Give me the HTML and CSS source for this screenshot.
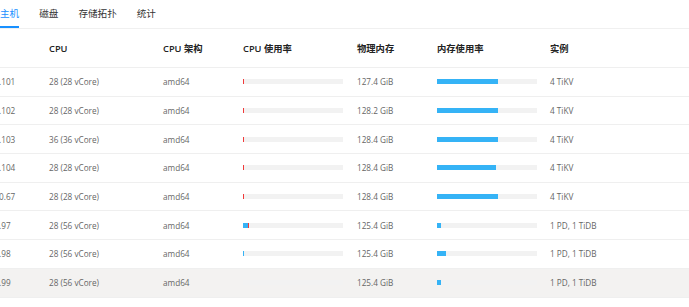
FILE: index.html
```html
<!DOCTYPE html>
<html lang="zh-CN">

<head>
  <meta charset="UTF-8">
  <title>主机</title>
  <link rel="stylesheet" href="styles.css">
</head>

<body>
  <div class="tabs">
    <div class="tab active">主机</div>
    <div class="tab">磁盘</div>
    <div class="tab">存储拓扑</div>
    <div class="tab">统计</div>
  </div>

  <div class="table-wrap">
    <div class="table">
      <div class="row head">
        <div class="cell">地址</div>
        <div class="cell">CPU</div>
        <div class="cell">CPU 架构</div>
        <div class="cell">CPU 使用率</div>
        <div class="cell">物理内存</div>
        <div class="cell">内存使用率</div>
        <div class="cell">实例</div>
      </div>

      <div class="row">
        <div class="cell">192.168.1.101</div>
        <div class="cell">28 (28 vCore)</div>
        <div class="cell">amd64</div>
        <div class="cell"><div class="bar"><span class="red" style="width: 1px"></span></div></div>
        <div class="cell">127.4 GiB</div>
        <div class="cell"><div class="bar"><span class="blue" style="width: 61px"></span></div></div>
        <div class="cell">4 TiKV</div>
      </div>

      <div class="row">
        <div class="cell">192.168.1.102</div>
        <div class="cell">28 (28 vCore)</div>
        <div class="cell">amd64</div>
        <div class="cell"><div class="bar"><span class="red" style="width: 1px"></span></div></div>
        <div class="cell">128.2 GiB</div>
        <div class="cell"><div class="bar"><span class="blue" style="width: 61px"></span></div></div>
        <div class="cell">4 TiKV</div>
      </div>

      <div class="row">
        <div class="cell">192.168.1.103</div>
        <div class="cell">36 (36 vCore)</div>
        <div class="cell">amd64</div>
        <div class="cell"><div class="bar"><span class="red" style="width: 1px"></span></div></div>
        <div class="cell">128.4 GiB</div>
        <div class="cell"><div class="bar"><span class="blue" style="width: 61px"></span></div></div>
        <div class="cell">4 TiKV</div>
      </div>

      <div class="row">
        <div class="cell">192.168.1.104</div>
        <div class="cell">28 (28 vCore)</div>
        <div class="cell">amd64</div>
        <div class="cell"><div class="bar"><span class="red" style="width: 1px"></span></div></div>
        <div class="cell">128.4 GiB</div>
        <div class="cell"><div class="bar"><span class="blue" style="width: 59px"></span></div></div>
        <div class="cell">4 TiKV</div>
      </div>

      <div class="row">
        <div class="cell">192.168.10.67</div>
        <div class="cell">28 (28 vCore)</div>
        <div class="cell">amd64</div>
        <div class="cell"><div class="bar"><span class="red" style="width: 1px"></span></div></div>
        <div class="cell">128.4 GiB</div>
        <div class="cell"><div class="bar"><span class="blue" style="width: 61px"></span></div></div>
        <div class="cell">4 TiKV</div>
      </div>

      <div class="row">
        <div class="cell">192.168.1.97</div>
        <div class="cell">28 (56 vCore)</div>
        <div class="cell">amd64</div>
        <div class="cell"><div class="bar"><span class="blue" style="width: 5px"></span><span class="red" style="width: 1px"></span></div></div>
        <div class="cell">125.4 GiB</div>
        <div class="cell"><div class="bar"><span class="blue" style="width: 4px"></span></div></div>
        <div class="cell">1 PD, 1 TiDB</div>
      </div>

      <div class="row">
        <div class="cell">192.168.1.98</div>
        <div class="cell">28 (56 vCore)</div>
        <div class="cell">amd64</div>
        <div class="cell"><div class="bar"><span class="blue" style="width: 1px"></span></div></div>
        <div class="cell">125.4 GiB</div>
        <div class="cell"><div class="bar"><span class="blue" style="width: 9px"></span></div></div>
        <div class="cell">1 PD, 1 TiDB</div>
      </div>

      <div class="row hover">
        <div class="cell">192.168.1.99</div>
        <div class="cell">28 (56 vCore)</div>
        <div class="cell">amd64</div>
        <div class="cell"><div class="bar"></div></div>
        <div class="cell">125.4 GiB</div>
        <div class="cell"><div class="bar"><span class="blue" style="width: 4px"></span></div></div>
        <div class="cell">1 PD, 1 TiDB</div>
      </div>
    </div>
  </div>
</body>

</html>
```

FILE: styles.css
```css
* {
  box-sizing: border-box;
}

body {
  margin: 0;
  background: #fff;
  font-family: "Open Sans", "Noto Sans CJK SC", sans-serif;
  color: #333;
  overflow: hidden;
}

.tabs {
  display: flex;
  gap: 20px;
  height: 29px;
  border-bottom: 1px solid #f0f0f0;
}

.tab {
  font-size: 9.6px;
  line-height: 27px;
  color: #333;
}

.tab.active {
  color: #1890ff;
  border-bottom: 2px solid #1890ff;
}

.table-wrap {
  overflow: hidden;
}

.table {
  margin-left: -38px;
  width: 800px;
}

.row {
  display: grid;
  grid-template-columns: 87px 114px 80px 114px 80px 113px 1fr;
  align-items: center;
  height: 28.7px;
  border-bottom: 1px solid #efefef;
  font-size: 8.2px;
  color: #666;
}

.row.head {
  height: 39px;
  font-size: 9.3px;
  font-weight: 600;
  color: #222;
}

.row.hover {
  background: #f3f2f1;
}

.bar {
  display: flex;
  width: 100px;
  height: 5px;
  background: #f2f2f2;
}

.bar span {
  height: 100%;
}

.bar .blue {
  background: #35b3f6;
}

.bar .red {
  background: #f03a3a;
}
```
